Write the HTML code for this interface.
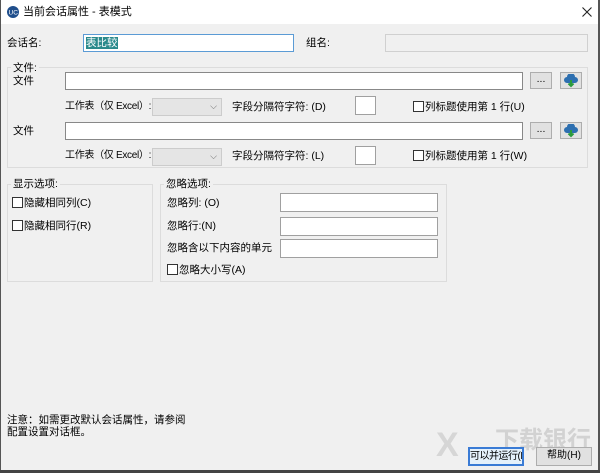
<!DOCTYPE html>
<html><head><meta charset="utf-8"><style>
*{margin:0;padding:0;box-sizing:border-box}
html,body{width:600px;height:473px;overflow:hidden}
body{background:#f0f0f0;font-family:"Liberation Sans","Noto Sans CJK SC",sans-serif;font-size:10.5px;color:#000;position:relative}
.a{position:absolute;white-space:nowrap;line-height:12px}
.in{position:absolute;background:#fff;border:1px solid #a0a0a0}
.gb{position:absolute;border:1px solid #dcdcdc}
.gl{position:absolute;background:#f0f0f0;padding:0 2px;line-height:12px;white-space:nowrap}
.cb{display:inline-block;width:11px;height:11px;border:1px solid #333;background:#fff;vertical-align:-2px;margin-right:1px}
.btn{position:absolute;background:#e1e1e1;border:1px solid #adadad;text-align:center;line-height:15px;white-space:nowrap;overflow:hidden}
</style></head><body>
<div style="position:absolute;left:0;top:0;width:600px;height:24px;background:#fff"></div>
<div style="position:absolute;left:0;top:0;width:1px;height:473px;background:#555"></div>
<div style="position:absolute;right:0;top:0;width:2px;height:473px;background:#555"></div>
<div style="position:absolute;left:0;top:470px;width:600px;height:3px;background:#444"></div>
<svg style="position:absolute;left:7px;top:6px" width="12" height="12" viewBox="0 0 12 12"><circle cx="6" cy="6" r="6" fill="#1f4e8c"/><text x="1.5" y="8.5" font-size="6.5" fill="#fff" font-family="Liberation Sans">UC</text></svg>
<div class="a" style="left:23px;top:6px;font-size:11px">当前会话属性 - 表模式</div>
<svg style="position:absolute;left:582px;top:7px" width="10" height="10" viewBox="0 0 10 10"><path d="M0.5 0.5L9.5 9.5M9.5 0.5L0.5 9.5" stroke="#222" stroke-width="1.1"/></svg>

<div class="a" style="left:7px;top:37px">会话名:</div>
<div class="in" style="left:83px;top:34px;width:211px;height:18px;border-color:#5b9bd5"><span style="position:absolute;left:2px;top:2px;background:#2a8a8c;color:#fff;line-height:12px">表比较</span></div>
<div class="a" style="left:306px;top:37px">组名:</div>
<div class="in" style="left:385px;top:34px;width:203px;height:18px;background:#f0f0f0;border-color:#d0d0d0"></div>

<div class="gb" style="left:7px;top:67px;width:581px;height:101px"></div>
<div class="gl" style="left:11px;top:62px">文件:</div>
<div class="a" style="left:13px;top:75px">文件</div>
<div class="in" style="left:65px;top:72px;width:458px;height:18px;border-color:#888"></div>
<div class="btn" style="left:530px;top:72px;width:22px;height:17px;line-height:12px">...</div>
<div class="btn" style="left:560px;top:72px;width:22px;height:17px"><svg width="16" height="14" viewBox="0 0 16 14" style="margin-top:1px"><path d="M4 9a3 3 0 0 1 0-6 4 4 0 0 1 8 0 3 3 0 0 1 0 6z" fill="#2d6fb0"/><path d="M8 6v6M5.5 9.5L8 12l2.5-2.5" stroke="#2b9a3c" stroke-width="2" fill="none"/></svg></div>
<div class="a" style="left:65px;top:101px;font-size:10px;letter-spacing:-0.3px">工作表（仅 Excel）:</div>
<div class="in" style="left:152px;top:98px;width:70px;height:18px;background:#e5e5e5;border-color:#ccc"><span style="position:absolute;right:4px;top:2px;color:#666;font-size:9px">⌵</span></div>
<div class="a" style="left:232px;top:101px">字段分隔符字符: (D)</div>
<div class="in" style="left:355px;top:96px;width:21px;height:19px"></div>
<div class="a" style="left:413px;top:101px"><span class="cb"></span>列标题使用第 1 行(U)</div>

<div class="a" style="left:13px;top:125px">文件</div>
<div class="in" style="left:65px;top:122px;width:458px;height:18px;border-color:#888"></div>
<div class="btn" style="left:530px;top:122px;width:22px;height:17px;line-height:12px">...</div>
<div class="btn" style="left:560px;top:122px;width:22px;height:17px"><svg width="16" height="14" viewBox="0 0 16 14" style="margin-top:1px"><path d="M4 9a3 3 0 0 1 0-6 4 4 0 0 1 8 0 3 3 0 0 1 0 6z" fill="#2d6fb0"/><path d="M8 6v6M5.5 9.5L8 12l2.5-2.5" stroke="#2b9a3c" stroke-width="2" fill="none"/></svg></div>
<div class="a" style="left:65px;top:150px;font-size:10px;letter-spacing:-0.3px">工作表（仅 Excel）:</div>
<div class="in" style="left:152px;top:148px;width:70px;height:18px;background:#e5e5e5;border-color:#ccc"><span style="position:absolute;right:4px;top:2px;color:#666;font-size:9px">⌵</span></div>
<div class="a" style="left:232px;top:150px">字段分隔符字符: (L)</div>
<div class="in" style="left:355px;top:146px;width:21px;height:19px"></div>
<div class="a" style="left:413px;top:150px"><span class="cb"></span>列标题使用第 1 行(W)</div>

<div class="gb" style="left:7px;top:184px;width:146px;height:98px"></div>
<div class="gl" style="left:11px;top:178px">显示选项:</div>
<div class="a" style="left:12px;top:197px"><span class="cb"></span>隐藏相同列(C)</div>
<div class="a" style="left:12px;top:220px"><span class="cb"></span>隐藏相同行(R)</div>

<div class="gb" style="left:160px;top:184px;width:287px;height:98px"></div>
<div class="gl" style="left:164px;top:178px">忽略选项:</div>
<div class="a" style="left:167px;top:197px">忽略列: (O)</div>
<div class="in" style="left:280px;top:193px;width:158px;height:19px"></div>
<div class="a" style="left:167px;top:220px">忽略行:(N)</div>
<div class="in" style="left:280px;top:217px;width:158px;height:19px"></div>
<div class="a" style="left:167px;top:242px">忽略含以下内容的单元</div>
<div class="in" style="left:280px;top:239px;width:158px;height:19px"></div>
<div class="a" style="left:167px;top:264px"><span class="cb"></span>忽略大小写(A)</div>

<div class="a" style="left:7px;top:414px">注意：如需更改默认会话属性，请参阅</div>
<div class="a" style="left:7px;top:426px">配置设置对话框。</div>

<div class="a" style="left:495px;top:428px;font-size:24px;color:#d2d2d2;line-height:26px;font-weight:bold">下载银行</div>
<div class="a" style="left:436px;top:427px;font-size:34px;color:#d6d6d6;line-height:36px;font-weight:bold">X</div>
<div class="btn" style="left:468px;top:447px;width:56px;height:19px;border:2px solid #3a7bd5;background:#e5f1fb;font-size:10px;letter-spacing:-0.5px">可以并运行(R)</div>
<div class="btn" style="left:536px;top:447px;width:56px;height:19px;font-size:10px">帮助(H)</div>
</body></html>
